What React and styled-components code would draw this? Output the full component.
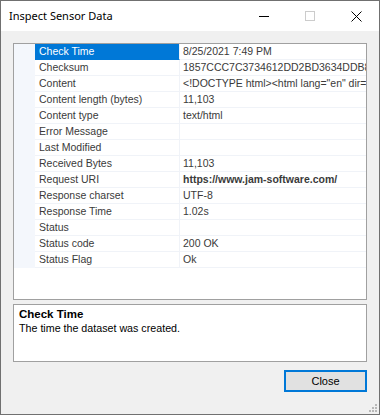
import React from "react";
import styled, { createGlobalStyle } from "styled-components";

const Global = createGlobalStyle`
  html, body { margin: 0; padding: 0; background: #ffffff; }
  * { box-sizing: border-box; }
`;

const Window = styled.div`
  width: 380px;
  height: 415px;
  border: 1px solid #707070;
  display: flex;
  flex-direction: column;
  background: #f0f0f0;
  overflow: hidden;
`;

const TitleBar = styled.div`
  height: 30px;
  background: #ffffff;
  display: flex;
  align-items: center;
  flex-shrink: 0;
`;

const Title = styled.div`
  flex: 1;
  padding-left: 8px;
  font-family: "Noto Sans", sans-serif;
  font-size: 11px;
  color: #000;
  padding-bottom: 1px;
`;

const CaptionButton = styled.div`
  width: 46px;
  height: 30px;
  display: flex;
  align-items: center;
  justify-content: center;
`;

const Client = styled.div`
  flex: 1;
  display: flex;
  flex-direction: column;
  padding: 12px 12px 0 12px;
  position: relative;
`;

const GridBox = styled.div`
  height: 257px;
  border: 1px solid #a0a0a0;
  background: #ffffff;
  display: flex;
`;

const Gutter = styled.div`
  width: 21px;
  height: 224px;
  background: #f4f7fc;
  flex-shrink: 0;
`;

const Rows = styled.div`
  flex: 1;
  display: flex;
  flex-direction: column;
  min-width: 0;
`;

const Row = styled.div`
  display: grid;
  grid-template-columns: 145px 1fr;
  height: 16px;
`;

const NameCell = styled.div`
  font-family: "Liberation Sans", Arial, sans-serif;
  font-size: 10.5px;
  line-height: 15px;
  padding-left: 4px;
  white-space: nowrap;
  overflow: hidden;
  color: ${(p) => (p.$selected ? "#ffffff" : "#3a3a3a")};
  background: ${(p) => (p.$selected ? "#0078d7" : "#ffffff")};
  border-bottom: 1px solid ${(p) => (p.$selected ? "#0078d7" : "#f0f3f8")};
  border-right: 1px solid #f0f3f8;
`;

const ValueCell = styled.div`
  font-family: "Liberation Sans", Arial, sans-serif;
  font-size: 10.5px;
  line-height: 15px;
  padding-left: 3px;
  white-space: nowrap;
  overflow: hidden;
  color: #3a3a3a;
  font-weight: ${(p) => (p.$bold ? 700 : 400)};
  border-bottom: 1px solid #f0f3f8;
`;

const DescBox = styled.div`
  margin-top: 4px;
  height: 58px;
  border: 1px solid #a0a0a0;
  background: #ffffff;
  padding: 2px 5px;
  font-family: "Liberation Sans", Arial, sans-serif;
  font-size: 10.7px;
  color: #000;
`;

const DescTitle = styled.div`
  font-weight: 700;
  font-size: 11.5px;
  line-height: 14px;
`;

const DescText = styled.div`
  line-height: 14px;
`;

const ButtonRow = styled.div`
  display: flex;
  justify-content: flex-end;
  margin-top: 8px;
`;

const Button = styled.button`
  width: 83px;
  height: 22px;
  border: 2px solid #0078d7;
  background: #e1e1e1;
  font-family: "Liberation Sans", Arial, sans-serif;
  font-size: 11px;
  color: #000;
  padding: 0;
  margin: 0;
`;

const Grip = styled.svg`
  position: absolute;
  right: 1px;
  bottom: 1px;
`;

const rows = [
  ["Check Time", "8/25/2021 7:49 PM"],
  ["Checksum", "1857CCC7C3734612DD2BD3634DDB8A1F09"],
  ["Content", '<!DOCTYPE html><html lang="en" dir="ltr">'],
  ["Content length (bytes)", "11,103"],
  ["Content type", "text/html"],
  ["Error Message", ""],
  ["Last Modified", ""],
  ["Received Bytes", "11,103"],
  ["Request URI", "https://www.jam-software.com/", true],
  ["Response charset", "UTF-8"],
  ["Response Time", "1.02s"],
  ["Status", ""],
  ["Status code", "200 OK"],
  ["Status Flag", "Ok"],
];

export default function App() {
  return (
    <>
      <Global />
      <Window>
        <TitleBar>
          <Title>Inspect Sensor Data</Title>
          <CaptionButton>
            <svg width="11" height="11" viewBox="0 0 11 11">
              <path d="M0 5.5 H10" stroke="#000" strokeWidth="1" />
            </svg>
          </CaptionButton>
          <CaptionButton>
            <svg width="11" height="11" viewBox="0 0 11 11">
              <rect x="0.5" y="0.5" width="9" height="9" fill="none" stroke="#cccccc" strokeWidth="1" />
            </svg>
          </CaptionButton>
          <CaptionButton>
            <svg width="11" height="11" viewBox="0 0 11 11">
              <path d="M0.5 0.5 L10.5 10.5 M10.5 0.5 L0.5 10.5" stroke="#000" strokeWidth="1" />
            </svg>
          </CaptionButton>
        </TitleBar>
        <Client>
          <GridBox>
            <Gutter />
            <Rows>
              {rows.map(([name, value, bold], i) => (
                <Row key={name}>
                  <NameCell $selected={i === 0}>{name}</NameCell>
                  <ValueCell $bold={bold}>{value}</ValueCell>
                </Row>
              ))}
            </Rows>
          </GridBox>
          <DescBox>
            <DescTitle>Check Time</DescTitle>
            <DescText>The time the dataset was created.</DescText>
          </DescBox>
          <ButtonRow>
            <Button>Close</Button>
          </ButtonRow>
          <Grip width="12" height="12" viewBox="0 0 12 12">
            {[[9, 3], [9, 6], [6, 6], [9, 9], [6, 9], [3, 9]].map(([x, y]) => (
              <rect key={`${x}-${y}`} x={x} y={y} width="2" height="2" fill="#b8b8b8" />
            ))}
          </Grip>
        </Client>
      </Window>
    </>
  );
}
